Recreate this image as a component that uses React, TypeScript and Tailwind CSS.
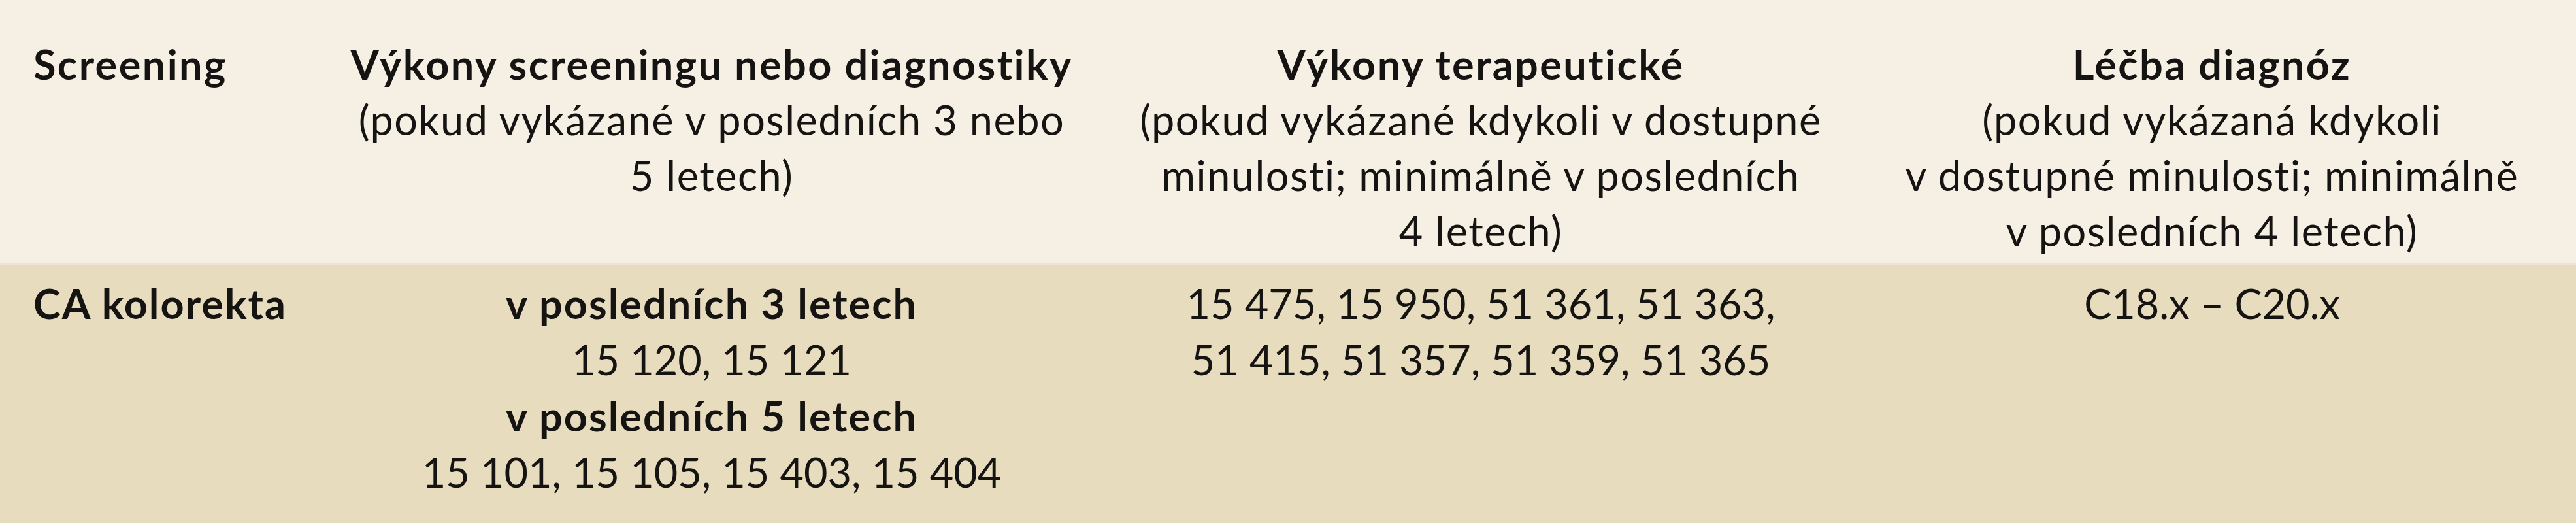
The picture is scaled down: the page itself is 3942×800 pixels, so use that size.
import React from "react";

const cols = "grid grid-cols-[474px_1128px_1226px_1012px] px-[51px]";

export default function App() {
  return (
    <div className="w-[3942px] h-[800px] overflow-hidden bg-[#e7dcbd] text-[#161412] font-['Lato',sans-serif] text-[63px]">
      <div className={`${cols} bg-[#f5f0e3] pt-[55px] pb-[8px] leading-[85px] border-b-2 border-[#ede5cf] tracking-[1.5px]`}>
        <div className="font-bold whitespace-nowrap tracking-[2.4px]">Screening</div>
        <div className="text-center whitespace-nowrap">
          <div className="font-bold tracking-[2.4px]">Výkony screeningu nebo diagnostiky</div>
          <div>(pokud vykázané v posledních 3 nebo</div>
          <div>5 letech)</div>
        </div>
        <div className="text-center whitespace-nowrap">
          <div className="font-bold tracking-[2.4px]">Výkony terapeutické</div>
          <div>(pokud vykázané kdykoli v dostupné</div>
          <div>minulosti; minimálně v posledních</div>
          <div>4 letech)</div>
        </div>
        <div className="text-center whitespace-nowrap">
          <div className="font-bold tracking-[2.4px]">Léčba diagnóz</div>
          <div>(pokud vykázaná kdykoli</div>
          <div>v dostupné minulosti; minimálně</div>
          <div>v posledních 4 letech)</div>
        </div>
      </div>
      <div className={`${cols} pt-[16px] leading-[86px]`}>
        <div className="font-bold whitespace-nowrap tracking-[2px]">CA kolorekta</div>
        <div className="text-center whitespace-nowrap">
          <div className="font-bold tracking-[2px]">v posledních 3 letech</div>
          <div>15 120, 15 121</div>
          <div className="font-bold tracking-[2px]">v posledních 5 letech</div>
          <div>15 101, 15 105, 15 403, 15 404</div>
        </div>
        <div className="text-center whitespace-nowrap">
          <div>15 475, 15 950, 51 361, 51 363,</div>
          <div>51 415, 51 357, 51 359, 51 365</div>
        </div>
        <div className="text-center whitespace-nowrap">
          <div>C18.x – C20.x</div>
        </div>
      </div>
    </div>
  );
}
